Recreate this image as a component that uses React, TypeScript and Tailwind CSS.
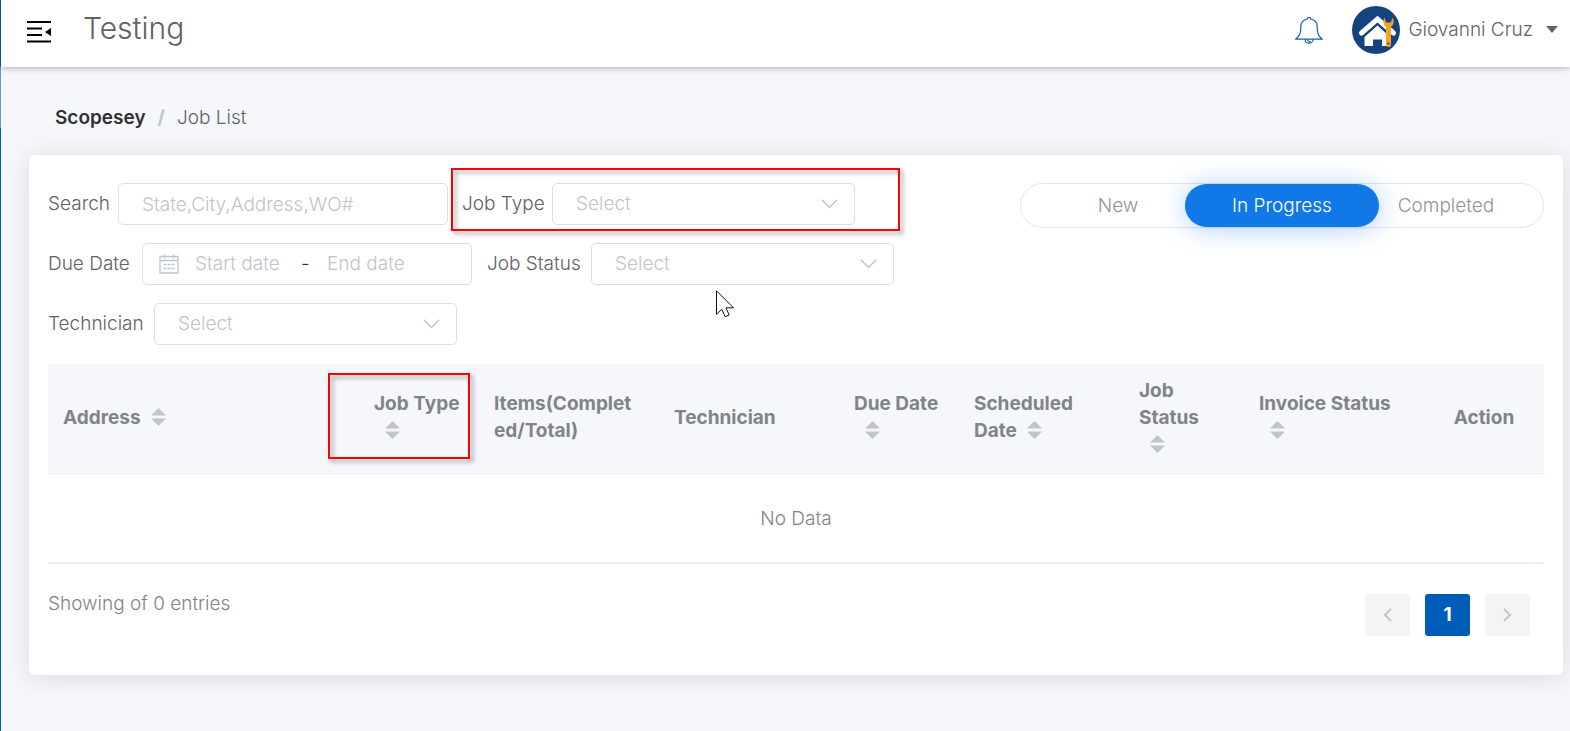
import React from "react";

interface Column {
  title: string;
  width: string;
  sortable: boolean;
  marked?: boolean;
  align?: string;
}

const columns: Column[] = [
  { title: "Address", width: "", sortable: true },
  { title: "Job Type", width: "w-[120px]", sortable: true, marked: true },
  { title: "Items(Complet\ned/Total)", width: "w-[180px]", sortable: false },
  { title: "Technician", width: "w-[180px]", sortable: false },
  { title: "Due Date", width: "w-[120px]", sortable: true },
  { title: "Scheduled Date", width: "w-[165px]", sortable: true },
  { title: "Job Status", width: "w-[120px]", sortable: true },
  { title: "Invoice Status", width: "w-[180px]", sortable: true },
  { title: "Action", width: "w-[120px]", sortable: false, align: "text-center" },
];

const tabs = ["New", "In Progress", "Completed"];

const MenuIcon = () => (
  <svg width="24" height="22" viewBox="0 0 24 22" fill="#000">
    <path d="M0 0h24v2H0zM0 6.5h15v2H0zM0 13h15v2H0zM0 19.5h24v2H0zM24 7v8l-6-4z" />
  </svg>
);

const BellIcon = () => (
  <svg width="28" height="28" viewBox="0 0 28 28" fill="none" stroke="#1560b8" strokeWidth="1.2">
    <path d="M12.300 3a1.700 1.700 0 0 1 3.400 0c4.300.8 6.500 4 6.500 8 0 6.500 1 9 5 12.200H.8C4.800 20 5.800 17.500 5.800 11c0-4 2.200-7.200 6.500-8z" />
    <path d="M10 23.200a4 4 0 0 0 8 0M12.200 23.200a2.600 2.600 0 0 0 3.300 2.300" />
  </svg>
);

const Avatar = () => (
  <svg width="48" height="48" viewBox="0 0 48 48">
    <circle cx="24" cy="24" r="24" fill="#15437f" />
    <path d="M9.500 27L25.500 13 41.500 27" fill="none" stroke="#fff" strokeWidth="5" strokeLinecap="round" />
    <path d="M12.500 31l13-11.500L37 30V40h-7v-6.500h-9V40h-8.500z" fill="#fff" />
    <path
      d="M32.500 11.800c-2 3.500-1.500 7 1.500 9V38.500a2.500 2.500 0 0 0 5 0V20.800c3-2 3.500-5.500 1.500-9l-1.700 4.700h-4.600z"
      fill="#f7a325"
    />
    <circle cx="36.500" cy="37.500" r="1.100" fill="#15437f" />
  </svg>
);

const CalendarIcon = () => (
  <svg width="20" height="20" viewBox="0 0 20 20" fill="none" stroke="#c0c4cc" strokeWidth="1.300">
    <path d="M1 2.500h18v16.500H1zM1 6.500h18M5.500.5v4M14.500.5v4" />
    <path d="M4.500 10.500h11M4.500 14.500h11" strokeDasharray="3 1" />
  </svg>
);

const SortIcon = () => (
  <span className="inline-flex w-9 justify-center align-[-2px]">
    <svg width="15" height="18" viewBox="0 0 15 18" fill="#c0c4cc">
      <path d="M7.500 0L15 7.500H0zM0 10.500h15L7.500 18z" />
    </svg>
  </span>
);

const Mark = ({ className }: { className: string }) => (
  <span
    className={`pointer-events-none absolute border-2 border-[#ff0000] drop-shadow-[3px_3px_2px_rgba(0,0,0,0.4)] ${className}`}
  />
);

const SelectField = ({ id, label, labelWidth }: { id: string; label: string; labelWidth: string }) => (
  <div className="flex items-center gap-[9px]">
    <label htmlFor={id} className={`whitespace-nowrap ${labelWidth}`}>
      {label}
    </label>
    <div className="relative">
      <select
        id={id}
        className="h-[42px] w-[303px] appearance-none rounded-[5px] border border-[#dcdfe6] bg-white pl-[23px] text-[#c0c4cc]"
      >
        <option>Select</option>
      </select>
      <svg
        className="pointer-events-none absolute top-4 right-[17px]"
        width="17"
        height="10"
        viewBox="0 0 17 10"
        fill="none"
        stroke="#c0c4cc"
        strokeWidth="1.500"
      >
        <path d="M.8.8l7.700 7.700L16.200.8" />
      </svg>
    </div>
  </div>
);

function Header() {
  return (
    <header className="relative flex h-[67px] items-center bg-white pr-3 pb-2 pl-[26px] shadow-[0_1px_6px_rgba(0,0,0,0.3)]">
      <button aria-label="Toggle menu" className="mt-1">
        <MenuIcon />
      </button>
      <h1 className="ml-8 pb-1 text-[30px] leading-8 font-light text-[#606266]">Testing</h1>
      <button aria-label="Notifications" className="ml-auto">
        <BellIcon />
      </button>
      <button className="ml-[29px] flex items-center gap-2 text-[#606266]">
        <Avatar />
        Giovanni Cruz
        <svg className="ml-[5px]" width="12" height="7" viewBox="0 0 12 7" fill="#606266">
          <path d="M0 0h12L6 7z" />
        </svg>
      </button>
    </header>
  );
}

function Filters() {
  return (
    <div className="flex flex-col gap-[18px] text-[#606266]">
      <div className="flex gap-[14px]">
        <div className="flex items-center gap-[9px]">
          <label htmlFor="search" className="w-[61px]">
            Search
          </label>
          <input
            id="search"
            placeholder="State,City,Address,WO#"
            className="h-[42px] w-[330px] rounded-[5px] border border-[#dcdfe6] px-[23px] placeholder:text-[#c0c4cc]"
          />
        </div>
        <div className="relative">
          <SelectField id="job-type" label="Job Type" labelWidth="w-[81px]" />
          <Mark className="-top-[15px] -right-[45px] -bottom-[6px] -left-[11px]" />
        </div>
      </div>
      <div className="flex gap-[15px]">
        <div className="flex items-center gap-[9px]">
          <label htmlFor="start-date" className="w-[85px]">
            Due Date
          </label>
          <div className="flex h-[42px] w-[330px] items-center rounded-[5px] border border-[#dcdfe6] pl-4">
            <CalendarIcon />
            <input
              id="start-date"
              placeholder="Start date"
              className="ml-4 w-[106px] placeholder:text-[#c0c4cc]"
            />
            <span className="w-[26px] text-[#303133]">-</span>
            <input
              aria-label="End date"
              placeholder="End date"
              className="w-[106px] placeholder:text-[#c0c4cc]"
            />
          </div>
        </div>
        <SelectField id="job-status" label="Job Status" labelWidth="w-[95px]" />
      </div>
      <SelectField id="technician" label="Technician" labelWidth="w-[97px]" />
    </div>
  );
}

function StatusTabs() {
  return (
    <div className="flex h-[45px] rounded-full border border-[#e4e7ea]">
      {tabs.map((tab, index) => (
        <button
          key={tab}
          className={
            index === 1
              ? "relative -mx-[30px] w-[194px] rounded-full bg-[#1079e7] text-white shadow-[0_2px_26px_rgba(16,121,231,0.35)]"
              : "w-[194px] text-[#8a959f]"
          }
        >
          {tab}
        </button>
      ))}
    </div>
  );
}

function JobTable() {
  return (
    <table className="mt-[19px] w-full table-fixed border-b-2 border-[#ebeef5] text-[#808488]">
      <thead className="bg-[#f5f7fa]">
        <tr className="h-[109px] border-b border-[#ebeef5]">
          {columns.map((col) => (
            <th
              key={col.title}
              className={`relative px-[15px] pb-[2px] leading-[27px] font-bold whitespace-pre-line ${col.width} ${col.align ?? "text-left"}`}
            >
              {col.title}
              {col.sortable && (
                <>
                  <wbr />
                  <SortIcon />
                </>
              )}
              {col.marked && <Mark className="top-[9px] right-[9px] bottom-[14px] -left-[31px]" />}
            </th>
          ))}
        </tr>
      </thead>
      <tbody>
        <tr className="h-[90px]">
          <td colSpan={columns.length} className="pt-[2px] text-center">
            No Data
          </td>
        </tr>
      </tbody>
    </table>
  );
}

function Pagination() {
  return (
    <nav aria-label="Pagination" className="mt-[30px] mr-[14px] flex gap-[15px]">
      <button
        aria-label="Previous page"
        className="flex h-[42px] w-[45px] items-center justify-center rounded-[3px] bg-[#f4f4f5]"
      >
        <svg width="9" height="14" viewBox="0 0 9 14" fill="none" stroke="#c0c4cc" strokeWidth="2">
          <path d="M8 1L2 7l6 6" />
        </svg>
      </button>
      <button className="h-[42px] w-[45px] rounded-[3px] bg-[#005cb9] font-bold text-white">1</button>
      <button
        aria-label="Next page"
        className="flex h-[42px] w-[45px] items-center justify-center rounded-[3px] bg-[#f4f4f5]"
      >
        <svg width="9" height="14" viewBox="0 0 9 14" fill="none" stroke="#c0c4cc" strokeWidth="2">
          <path d="M1 1l6 6-6 6" />
        </svg>
      </button>
    </nav>
  );
}

export default function App() {
  return (
    <div className="flex min-h-screen bg-[#f5f7fb] font-['Inter',sans-serif] text-[19px] leading-7 font-light">
      <aside className="w-px bg-[#005cb9] pt-[67px]">
        <div className="h-[61px] bg-[#5c9be0]" />
      </aside>
      <div className="min-w-0 flex-1">
        <Header />
        <main className="pt-[37px] pr-[7px] pl-7">
          <nav aria-label="Breadcrumb" className="flex gap-3 pl-[26px] text-[#606266]">
            <a href="#" className="font-semibold text-[#303133]">
              Scopesey
            </a>
            <span className="font-bold text-[#c0c4cc]">/</span>
            <span>Job List</span>
          </nav>
          <section className="relative mt-[23px] rounded-md bg-white px-[19px] pt-7 pb-[39px] shadow-[0_2px_24px_rgba(0,0,0,0.12)]">
            <div className="flex items-start justify-between">
              <Filters />
              <StatusTabs />
            </div>
            <JobTable />
            <div className="flex justify-between text-[#808488]">
              <p className="mt-[26px]">Showing of 0 entries</p>
              <Pagination />
            </div>
            <svg
              className="pointer-events-none absolute top-[135px] left-[687px]"
              width="19"
              height="28"
              viewBox="0 0 19 28"
              fill="#fff"
              stroke="#101020"
            >
              <path d="M.5.8v23.500l5.200-5 3.500 7.500 4-1.800-3.300-7.200h7.600z" />
            </svg>
          </section>
        </main>
      </div>
    </div>
  );
}
